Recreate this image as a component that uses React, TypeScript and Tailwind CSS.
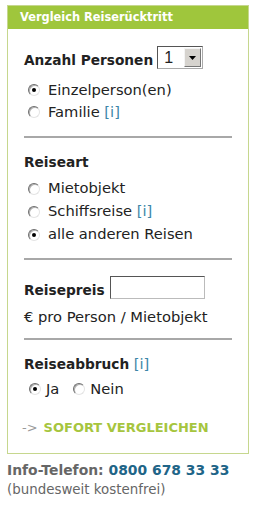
import React from "react";

const font = { fontFamily: '"DejaVu Sans", Verdana, sans-serif' };

function Radio({ checked }: { checked?: boolean }) {
  return (
    <span className="relative inline-block w-[12px] h-[12px] shrink-0 rounded-full bg-white border border-t-[#6e6e6e] border-l-[#6e6e6e] border-b-[#e4e4e4] border-r-[#e4e4e4] shadow-[inset_1px_1px_0_#b0b0b0]">
      {checked && (
        <span className="absolute left-[3px] top-[3px] w-[4px] h-[4px] rounded-full bg-black" />
      )}
    </span>
  );
}

function RadioRow({ checked, children, h = "h-[22px]" }: { checked?: boolean; children: React.ReactNode; h?: string }) {
  return (
    <div className={`flex items-center ${h} pl-[4px] gap-[8px]`}>
      <Radio checked={checked} />
      <span>{children}</span>
    </div>
  );
}

const Info = () => <span className="text-[#3c86a8]">[i]</span>;

const Divider = ({ mt }: { mt: string }) => (
  <div className={`${mt} h-[2px] bg-[#a8a8a8]`} />
);

export default function App() {
  return (
    <div className="w-[262px] h-[508px] bg-white pt-[5px] pl-[7px] text-[#222] text-[14.7px]" style={font}>
      <div className="w-[242px] border border-[#c6d78e]">
        <div className="h-[23px] bg-[#9fc63c] flex items-center pl-[12px] text-white font-bold text-[11.4px]">
          Vergleich Reiserücktritt
        </div>
        <div className="px-[16px] pb-[14px]">
          <div className="mt-[17px] flex items-end h-[23px] gap-[4px]">
            <span className="font-bold text-[13.7px] leading-[17px]">Anzahl Personen</span>
            <div className="w-[46px] h-[23px] border border-t-[#555] border-l-[#555] border-b-[#aaa] border-r-[#aaa] bg-white flex items-center justify-between pl-[6px] pr-[1px]">
              <span className="text-[16px] leading-none" style={{ fontFamily: '"Liberation Sans", Arial, sans-serif' }}>1</span>
              <span className="w-[17px] h-[19px] bg-[#d6d3ce] border border-t-[#f4f4f4] border-l-[#f4f4f4] border-b-[#777] border-r-[#777] flex items-center justify-center">
                <svg width="7" height="4" viewBox="0 0 7 4"><path d="M0 0h7L3.5 4z" fill="#000" /></svg>
              </span>
            </div>
          </div>
          <div className="mt-[10px]">
            <RadioRow checked>Einzelperson(en)</RadioRow>
            <RadioRow>Familie <Info /></RadioRow>
          </div>
          <Divider mt="mt-[13px]" />
          <div className="mt-[13px] h-[22px] flex items-center font-bold text-[13.7px]">Reiseart</div>
          <div className="mt-[4px]">
            <RadioRow h="h-[23px]">Mietobjekt</RadioRow>
            <RadioRow h="h-[23px]">Schiffsreise <Info /></RadioRow>
            <RadioRow h="h-[23px]" checked>alle anderen Reisen</RadioRow>
          </div>
          <Divider mt="mt-[12px]" />
          <div className="mt-[16px] flex items-end h-[23px] gap-[5px]">
            <span className="font-bold text-[13.7px] leading-[17px]">Reisepreis</span>
            <div className="w-[95px] h-[23px] border border-t-[#555] border-l-[#555] border-b-[#bbb] border-r-[#bbb] bg-white" />
          </div>
          <div className="mt-[7px] h-[22px] flex items-center">€ pro Person / Mietobjekt</div>
          <Divider mt="mt-[10px]" />
          <div className="mt-[13px] h-[22px] flex items-center">
            <span className="font-bold text-[13.7px]">Reiseabbruch</span>&nbsp;<Info />
          </div>
          <div className="mt-[3px] h-[22px] flex items-center pl-[5px]">
            <Radio checked />
            <span className="ml-[5px]">Ja</span>
            <span className="ml-[14px] flex"><Radio /></span>
            <span className="ml-[5px]">Nein</span>
          </div>
          <div className="mt-[17px] h-[22px] flex items-center -ml-[2px] text-[13px] font-bold">
            <span className="text-[#9a9a9a] font-normal text-[13px]">-&gt;</span>
            <span className="ml-[6px] text-[#a6c53e]">SOFORT VERGLEICHEN</span>
          </div>
        </div>
      </div>
      <div className="mt-[7px] leading-[19px]">
        <div className="font-bold text-[13.9px] text-[#666]">
          Info-Telefon: <span className="text-[#1f6588]">0800 678 33 33</span>
        </div>
        <div className="text-[13.4px] text-[#666]">(bundesweit kostenfrei)</div>
      </div>
    </div>
  );
}
